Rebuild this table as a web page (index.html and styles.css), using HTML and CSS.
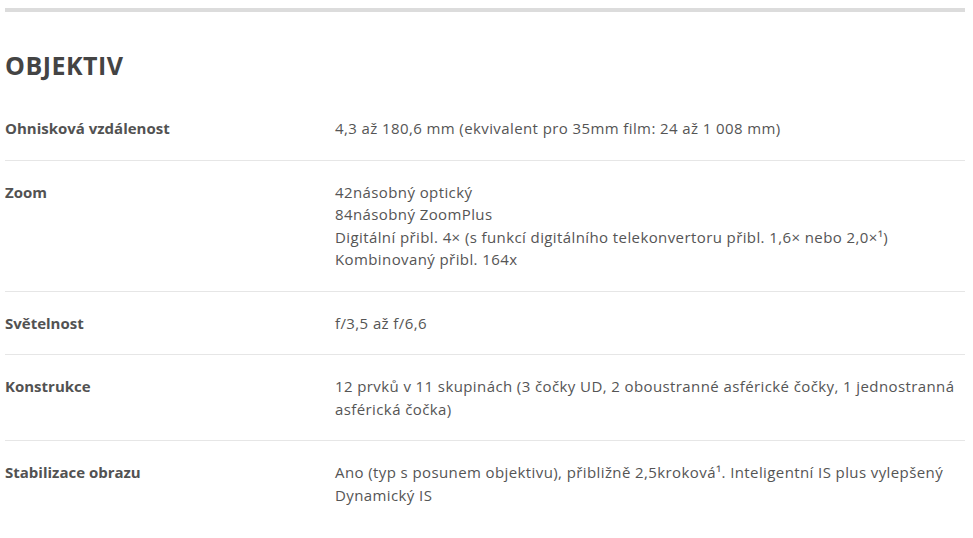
FILE: index.html
```html
<!DOCTYPE html>
<html lang="cs">
<head>
<meta charset="utf-8">
<title>Objektiv</title>
<link rel="stylesheet" href="styles.css">
</head>
<body>
<div class="page">
  <div class="topbar"></div>
  <h2 class="section-title">OBJEKTIV</h2>
  <div class="specs">
    <div class="row">
      <div class="label">Ohnisková vzdálenost</div>
      <div class="value">4,3 až 180,6 mm (ekvivalent pro 35mm film: 24 až 1 008 mm)</div>
    </div>
    <div class="row">
      <div class="label">Zoom</div>
      <div class="value">42násobný optický<br>84násobný ZoomPlus<br>Digitální přibl. 4× (s funkcí digitálního telekonvertoru přibl. 1,6× nebo 2,0×¹)<br>Kombinovaný přibl. 164x</div>
    </div>
    <div class="row">
      <div class="label">Světelnost</div>
      <div class="value">f/3,5 až f/6,6</div>
    </div>
    <div class="row">
      <div class="label">Konstrukce</div>
      <div class="value">12 prvků v 11 skupinách (3 čočky UD, 2 oboustranné asférické čočky, 1 jednostranná asférická čočka)</div>
    </div>
    <div class="row">
      <div class="label">Stabilizace obrazu</div>
      <div class="value">Ano (typ s posunem objektivu), přibližně 2,5kroková¹. Inteligentní IS plus vylepšený Dynamický IS</div>
    </div>
  </div>
</div>
</body>
</html>
```

FILE: styles.css
```css
html, body {
  margin: 0;
  padding: 0;
  background: #ffffff;
}

.page {
  width: 960px;
  padding: 8px 0 0 5px;
  font-family: "Open Sans", "Liberation Sans", sans-serif;
  color: #555555;
}

.topbar {
  height: 4px;
  background: #dcdcdc;
}

.section-title {
  margin: 37px 0 0 0;
  font-size: 25px;
  line-height: 32px;
  font-weight: 700;
  color: #444444;
  letter-spacing: 0.5px;
}

.specs {
  margin-top: 16px;
}

.row {
  display: grid;
  grid-template-columns: 330px 1fr;
  padding: 20px 0;
  border-bottom: 1px solid #e6e6e6;
  font-size: 15px;
  line-height: 22.5px;
}

.row:last-child {
  border-bottom: none;
}

.label {
  font-weight: 700;
  color: #525252;
}

.value {
  color: #555555;
  letter-spacing: 0.4px;
}
```
